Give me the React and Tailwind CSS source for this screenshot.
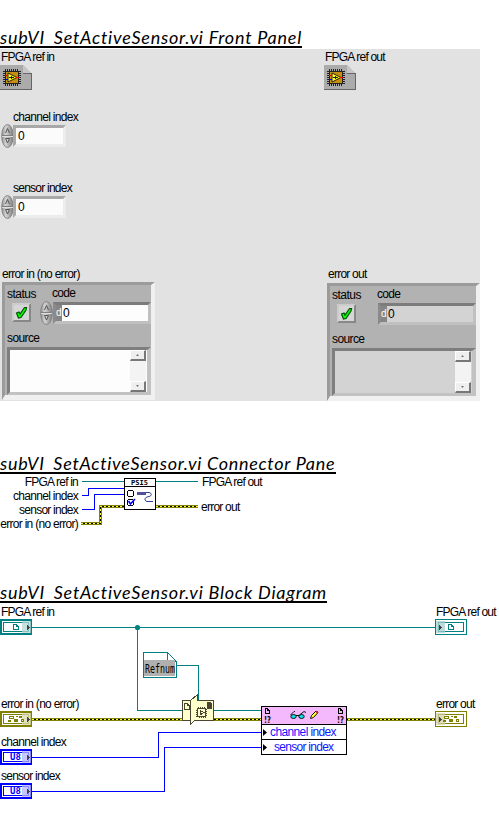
import React from "react";

const OLIVE = "#84840c";
const TEAL = "#008080";

const font = "font-['Liberation_Sans',Arial,sans-serif]";

function Label({ children, className = "" }) {
  return (
    <span className={`block h-4 whitespace-nowrap text-[12px] leading-4 text-black ${className}`}>
      {children}
    </span>
  );
}

const ERR_IN = "tracking-[-0.72px]";
const CHANNEL = "tracking-[-0.69px]";
const SENSOR = "tracking-[-0.76px]";
const REF = "tracking-[-0.8px]";
const OUT = "tracking-[-0.76px]";

function Title({ children, className }) {
  return (
    <h2
      className={`h-[21px] whitespace-nowrap border-b-2 border-black font-['Lato',Calibri,sans-serif] text-[18px] italic leading-[21px] text-black ${className}`}
    >
      subVI<span className="relative top-px">_</span>
      {children}
    </h2>
  );
}

function RefnumIcon() {
  const teeth = [5, 7, 9, 11, 13, 15, 17];
  return (
    <svg className="block" width="32" height="25" shapeRendering="crispEdges">
      <path d="M0 0H23L31 8V25H0Z" fill="#ababab" />
      <path d="M23 0V8H31Z" fill="#c6c6c6" />
      <path d="M23 8.5H31.5V24.5H0" fill="none" stroke="#666" />
      {teeth.map((t) => (
        <g key={t} fill="#222">
          <rect x={t} y="4" width="1" height="17" />
          <rect x="3" y={t + 1} width="18" height="1" />
        </g>
      ))}
      <rect x="5.5" y="6.5" width="13" height="12" fill="#c98f0c" stroke="#222" />
      <path d="M8 8L17 12.5L8 17Z" fill="#ffff20" stroke="#222" shapeRendering="auto" />
      <path d="M9 12.5H14M11.5 11V14" stroke="#222" />
      <rect x="5" y="10" width="3" height="1" fill="#f00" />
      <rect x="5" y="14" width="3" height="1" fill="#00f" />
      <rect x="16" y="12" width="3" height="1" fill="#f00" />
    </svg>
  );
}

function Spinner() {
  return (
    <svg className="block shrink-0" width="13" height="24">
      <defs>
        <linearGradient id="spin" x1="0" x2="1">
          <stop offset="0" stopColor="#8c8c8c" />
          <stop offset=".35" stopColor="#d4d4d4" />
          <stop offset="1" stopColor="#7c7c7c" />
        </linearGradient>
      </defs>
      <ellipse cx="6.5" cy="12" rx="5.8" ry="11.5" fill="url(#spin)" stroke="#808080" strokeWidth=".9" />
      <path d="M1 11.5H12" stroke="#808080" />
      <path d="M1 12.5H12" stroke="#dedede" />
      <path d="M4.5 9L6.5 4.5L8.5 9" fill="none" stroke="#555" />
      <path d="M4.5 14.5H8.5L6.5 19Z" fill="#ccc" stroke="#555" />
    </svg>
  );
}

function IndexControl({ name, tracking }) {
  return (
    <div>
      <Label className={`pl-[13px] ${tracking}`}>{name}</Label>
      <div className="flex h-[22px] items-center pl-px">
        <Spinner />
        <div className="-ml-px h-[22px] w-[53px] border-[3px] border-b-[#ececec] border-l-[#aaa] border-r-[#ececec] border-t-[#a8a8a8] bg-[#fbfbfb] pl-[2px]">
          <Label>0</Label>
        </div>
      </div>
    </div>
  );
}

function ScrollButton({ up }) {
  return (
    <div className="flex h-[11px] w-4 items-center justify-center border border-b-2 border-r-2 border-b-[#777] border-l-white border-r-[#777] border-t-white bg-[#efefef]">
      <svg className="block" width="3" height="2">
        <path d={up ? "M0 2H3L1.5 0Z" : "M0 0H3L1.5 2Z"} fill="#777" />
      </svg>
    </div>
  );
}

function ErrorCluster({ indicator = false }) {
  const fill = indicator ? "bg-[#d3d3d3]" : "bg-[#fdfdfd]";
  return (
    <div className="h-[118px] w-[153px] border-[3px] border-b-[5px] border-r-4 border-b-[#f0f0f0] border-l-[#9b9b9b] border-r-[#f0f0f0] border-t-[#9b9b9b] bg-[#b2b2b2]">
      <div className="flex h-[39px]">
        <div className="w-[34px] pl-[2px] pt-px">
          <Label className="tracking-[-0.5px]">status</Label>
          <div className="ml-[5px] mt-px flex h-[19px] w-[19px] items-center justify-center border-2 border-b-[#888] border-l-[#ccc] border-r-[#888] border-t-[#ccc] bg-[#d6d6d6]">
            <svg className="block" width="13" height="13">
              <path d="M1.5 7L4 6L5 8L9.5 1.5L11.5 1.5L11 4L6 11.5L3.5 12Z" fill="#0f0" stroke="#064f06" strokeWidth="1.2" />
            </svg>
          </div>
        </div>
        <div className="w-[112px]">
          <Label className="pl-[13px] tracking-[-0.7px]">code</Label>
          <div className="flex h-6 items-center">
            <div className={`pl-px ${indicator ? "invisible" : ""}`}>
              <Spinner />
            </div>
            <div
              className={`flex h-[22px] grow border-[3px] border-b-[#c0c0c0] border-l-[#8a8a8a] border-r-[#c0c0c0] border-t-[#7c7c7c] ${fill}`}
            >
              <div className="h-full w-[6px] shrink-0 bg-[#858585] pt-[2px] text-[10px] leading-3 text-white">d</div>
              <Label className="pl-px">0</Label>
            </div>
          </div>
        </div>
      </div>
      <Label className="ml-[2px] mt-[6px] tracking-[-0.6px]">source</Label>
      <div
        className={`ml-[2px] mt-px flex h-[48px] w-[144px] justify-end border-[3px] border-r-4 border-b-[#c2c2c2] border-l-[#7e7e7e] border-r-[#c2c2c2] border-t-[#7e7e7e] pr-px ${fill}`}
      >
        <div className="flex h-[42px] w-4 flex-col justify-between bg-[#f3f3f3]">
          <ScrollButton up />
          <ScrollButton />
        </div>
      </div>
    </div>
  );
}

function At({ x, y, children }) {
  return (
    <div className="absolute" style={{ left: x, top: y }}>
      {children}
    </div>
  );
}

function ErrorWire({ d }) {
  return (
    <g fill="none">
      <path d={d} stroke={OLIVE} strokeWidth="3" />
      <path d={d} stroke="#000" />
      <path d={d} stroke="#ffff30" strokeDasharray="2 2" />
    </g>
  );
}

function PageGlyph({ x, y, color, w = 5, h = 6 }) {
  return (
    <path
      d={`M${x + 0.5} ${y + 0.5}h${w - 3}v2h2v${h - 3}h${-(w - 1)}zM${x + w - 2.5} ${y + 0.5}l2 2`}
      fill="none"
      stroke={color}
      strokeWidth="1"
    />
  );
}

function Terminal({ color, tint, kind, output = false }) {
  const arrowX = output ? 4 : 27;
  return (
    <div className="grid h-4 w-8">
      <svg className="col-start-1 row-start-1 block" width="32" height="16" shapeRendering="crispEdges">
        {output ? (
          <>
            <rect x=".5" y=".5" width="31" height="15" fill="#fff" stroke={color} />
            <rect x="3.5" y="3.5" width="25" height="9" fill="#fff" stroke={color} />
          </>
        ) : (
          <>
            <rect width="32" height="16" fill={color} />
            <rect x="2.5" y="2.5" width="27" height="11" fill={color} stroke="#fff" />
            <rect x="4" y="4" width="24" height="8" fill="#fff" />
          </>
        )}
        <rect x={output ? 1 : 22} y="2" width="9" height="12" fill={tint} opacity=".75" />
        <path d={`M${arrowX} 5v7l3 -3.5z`} fill="#444" />
        {kind === "ref" && <PageGlyph x={13} y={5} color={color} w={6} h={6} />}
        {kind === "error" && (
          <g fill={color}>
            <path d="M9 5h5v3h-5zM10 6v1h3v-1z" fillRule="evenodd" />
            <rect x="16" y="5" width="2" height="1" />
            <rect x="19" y="5" width="3" height="2" />
            <rect x="8" y="9" width="3" height="2" />
            <rect x="14" y="8" width="4" height="3" />
            <path d="M21 8h3v3h-3zM22 9v1h1v-1z" fillRule="evenodd" />
          </g>
        )}
      </svg>
      {kind === "U8" && (
        <span className="z-10 col-start-1 row-start-1 pl-[10px] text-[9px] font-bold leading-4 text-[#0000ff] font-['DejaVu_Sans_Mono',monospace]">
          U8
        </span>
      )}
    </div>
  );
}

function FrontPanel() {
  return (
    <section className="grid h-[352px] w-[480px] grid-cols-[324px_156px] bg-[#e2e2e2]">
      <div>
        <Label className={`pl-px ${REF}`}>FPGA ref in</Label>
        <div className="h-[44px]">
          <RefnumIcon />
        </div>
        <div className="h-[71px]">
          <IndexControl name="channel index" tracking={CHANNEL} />
        </div>
        <div className="h-[86px]">
          <IndexControl name="sensor index" tracking={SENSOR} />
        </div>
        <div className="pl-[2px]">
          <Label className={ERR_IN}>error in (no error)</Label>
          <ErrorCluster />
        </div>
      </div>
      <div>
        <Label className={`pl-px ${REF}`}>FPGA ref out</Label>
        <div className="h-[201px]">
          <RefnumIcon />
        </div>
        <div className="flex flex-col gap-px pl-[3px]">
          <Label className={`pl-px ${OUT}`}>error out</Label>
          <ErrorCluster indicator />
        </div>
      </div>
    </section>
  );
}

function ConnectorPane() {
  return (
    <section className="flex h-[108px] w-full">
      <div className="flex w-[78px] flex-col items-end">
        <Label className={`h-3.5! ${REF}`}>FPGA ref in</Label>
        <Label className={`h-3.5! ${CHANNEL}`}>channel index</Label>
        <Label className={`h-3.5! ${SENSOR}`}>sensor index</Label>
        <Label className={`h-3.5! ${ERR_IN}`}>error in (no error)</Label>
      </div>
      <svg className="block shrink-0" width="123" height="60" viewBox="78 0 123 60" shapeRendering="crispEdges" fill="none">
        <path d="M82 7.5H124M156 7.5H198" stroke={TEAL} />
        <path d="M82 21.5H88.5V14.5H124M82 35.5H94.5V20.5H124" stroke="#0000ff" />
        <ErrorWire d="M81 49.5H100.5V32.5H124" />
        <ErrorWire d="M156 32.5H198" />
        <rect x="124.5" y="4.5" width="31" height="31" fill="#fff" stroke="#000" />
        <path d="M124 12.5H156" stroke="#000" />
        <text
          x="131"
          y="11"
          fill="#000"
          textLength="17"
          className="text-[7px] font-bold font-['DejaVu_Sans_Mono',monospace]"
        >
          PSI5
        </text>
        <path d="M128 16.5H133M128 22.5H133M127.5 17V22M133.5 17V22" stroke="#000" />
        <path d="M128 25.5H133M128 31.5H133M127.5 26V31M133.5 26V31" stroke="#000" />
        <path d="M128.5 27L130.5 30L135 25" stroke="#0000ff" strokeWidth="1.6" shapeRendering="auto" />
        <path d="M137 19.5H146" stroke="#5050a0" strokeWidth="3" />
        <path d="M146 18.5H149C152 19 152 22 149 22.5C144 23 144 27 147 27.5H153" stroke="#304090" shapeRendering="auto" />
      </svg>
      <div className="flex flex-col gap-[9px]">
        <Label className={`pl-px ${REF}`}>FPGA ref out</Label>
        <Label className={OUT}>error out</Label>
      </div>
    </section>
  );
}

function PropertyRow({ children, className }) {
  return (
    <div className={`flex items-center pl-px ${className}`}>
      <svg className="block" width="4" height="7">
        <path d="M0 0V7L4 3.5Z" />
      </svg>
      {children}
    </div>
  );
}

function PropertyNode() {
  return (
    <div className="h-[49px] w-[86px] border border-black bg-white">
      <div className="h-[18px] border-b border-black bg-[#f4b8fc]">
        <svg className="block" width="84" height="17" shapeRendering="crispEdges">
          {[3, 76].map((x) => (
            <g key={x}>
              <PageGlyph x={x} y={1} color="#000" />
              <text
                x={x - 1}
                y="16"
                className="text-[8px] font-bold font-['DejaVu_Sans',sans-serif]"
                textLength="7"
                lengthAdjust="spacingAndGlyphs"
              >
                !?
              </text>
            </g>
          ))}
          <g stroke="#111" shapeRendering="auto">
            <path d="M28.5 8L32 4.5H33M37.5 8L42 4.5L44 5.5M34 8.5H38" fill="none" strokeWidth="1" />
            <ellipse cx="31.5" cy="9.5" rx="2.7" ry="2" fill="#00e5e5" />
            <ellipse cx="39.5" cy="9.5" rx="2.7" ry="2" fill="#00e5e5" />
            <path d="M48.5 11.5L49.5 8.5L54 4L56 5.5L51.5 10.5Z" fill="#ffff20" />
          </g>
          <rect x="54" y="4" width="2" height="2" fill="#e02020" />
        </svg>
      </div>
      <PropertyRow className="h-[15px] gap-[3px] border-b border-black">
        <Label className="text-[#1414ff]! tracking-[-0.62px]">channel index</Label>
      </PropertyRow>
      <PropertyRow className="h-[14px] gap-[7px]">
        <Label className="text-[#1414ff]! tracking-[-0.72px]">sensor index</Label>
      </PropertyRow>
    </div>
  );
}

function BlockDiagram() {
  return (
    <section className="relative h-[221px] w-full bg-white">
      <svg className="block" width="499" height="221" shapeRendering="crispEdges" fill="none">
        <path d="M32 24.5H435M137.5 24.5V107.5H261M177 62.5H198.5V97" stroke={TEAL} />
        <circle cx="137.5" cy="24.5" r="2.6" fill={TEAL} shapeRendering="auto" />
        <ErrorWire d="M32 116.5H435" />
        <path d="M32 154.5H158.5V129.5H261M32 188.5H164.5V144.5H261" stroke="#0000ff" />
        <path d="M143.5 49.5H167.5L176.5 58.5V74.5H143.5Z" fill="#fff" stroke={TEAL} />
        <path d="M167.5 49.5V58.5H176.5" stroke={TEAL} />
        <rect x="144" y="57" width="31" height="16" fill="#b0b0b0" />
        <text
          x="145"
          y="70"
          fill="#000"
          textLength="30"
          lengthAdjust="spacingAndGlyphs"
          className="text-[12px] font-['DejaVu_Sans_Mono',monospace]"
        >
          Refnum
        </text>
        <g stroke="#4b4632" fill="#ffffcc">
          <rect x="182.5" y="97.5" width="31" height="20" />
          <path d="M190.5 121.5V97.5L197.5 91.5V114.5Z" />
          <path d="M196 98H213V117H195Z" stroke="none" />
        </g>
        <PageGlyph x={184} y={100} color="#4b4632" w={6} h={7} />
        <path d="M207 99H210L212 101V106H207Z" fill="#4b4632" />
        <rect x="197.5" y="105.5" width="8" height="8" stroke="#4b4632" strokeWidth="3" strokeDasharray="1 1" />
        <rect x="197.5" y="105.5" width="8" height="8" fill="#ffffcc" stroke="#4b4632" />
        <path d="M200 107.5V112L204 109.5Z" stroke="#4b4632" />
      </svg>
      <At x={1} y={1}><Label className={REF}>FPGA ref in</Label></At>
      <At x={436} y={1}><Label className={REF}>FPGA ref out</Label></At>
      <At x={1} y={93}><Label className={ERR_IN}>error in (no error)</Label></At>
      <At x={436} y={93}><Label className={OUT}>error out</Label></At>
      <At x={1} y={131}><Label className={CHANNEL}>channel index</Label></At>
      <At x={1} y={165}><Label className={SENSOR}>sensor index</Label></At>
      <At x={0} y={16}><Terminal color={TEAL} tint="#b5d5d5" kind="ref" /></At>
      <At x={435} y={16}><Terminal color={TEAL} tint="#a5cfcf" kind="ref" output /></At>
      <At x={0} y={108}><Terminal color="#808000" tint="#d8d8ae" kind="error" /></At>
      <At x={435} y={108}><Terminal color="#808000" tint="#d2d2a8" kind="error" output /></At>
      <At x={0} y={146}><Terminal color="#0000ff" tint="#b4b4ff" kind="U8" /></At>
      <At x={0} y={180}><Terminal color="#0000ff" tint="#b4b4ff" kind="U8" /></At>
      <At x={261} y={103}><PropertyNode /></At>
    </section>
  );
}

export default function App() {
  return (
    <main className={`h-[824px] w-[499px] overflow-hidden bg-white ${font}`}>
      <Title className="mb-px mt-[27px] w-[302px] tracking-[0.77px]">SetActiveSensor.vi Front Panel</Title>
      <FrontPanel />
      <Title className="mt-[52px] w-[336px] tracking-[0.7px]">SetActiveSensor.vi Connector Pane</Title>
      <ConnectorPane />
      <Title className="w-[327px] tracking-[0.76px]">SetActiveSensor.vi Block Diagram</Title>
      <BlockDiagram />
    </main>
  );
}
